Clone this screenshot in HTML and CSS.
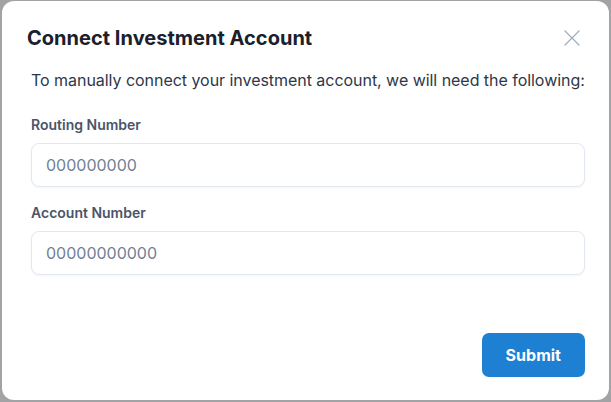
FILE: index.html
```html
<!DOCTYPE html>
<html lang="en">
<head>
<meta charset="utf-8">
<title>Connect Investment Account</title>
<link rel="stylesheet" href="styles.css">
</head>
<body>
<div class="backdrop">
  <section class="modal" role="dialog" aria-labelledby="modal-title">
    <header class="modal-header">
      <h2 id="modal-title" class="modal-title">Connect Investment Account</h2>
      <button class="close-btn" aria-label="Close">
        <svg width="16" height="16" viewBox="0 0 16 16" fill="none" stroke="currentColor" stroke-width="1.3" stroke-linecap="round">
          <path d="M1 1 L15 15 M15 1 L1 15"/>
        </svg>
      </button>
    </header>
    <div class="modal-body">
      <p class="intro">To manually connect your investment account, we will need the following:</p>
      <div class="field">
        <label class="field-label" for="routing">Routing Number</label>
        <input class="field-input" id="routing" type="text" placeholder="000000000">
      </div>
      <div class="field">
        <label class="field-label" for="account">Account Number</label>
        <input class="field-input" id="account" type="text" placeholder="00000000000">
      </div>
    </div>
    <footer class="modal-footer">
      <button class="submit-btn">Submit</button>
    </footer>
  </section>
</div>
</body>
</html>
```

FILE: styles.css
```css
* { box-sizing: border-box; }

html, body {
  margin: 0;
  padding: 0;
  height: 100%;
}

body {
  background: #a2a3a4;
  font-family: Inter, "Noto Sans", "Liberation Sans", sans-serif;
  overflow: hidden;
}

.backdrop {
  display: flex;
  padding: 1px 4px 2px 2px;
  height: 100%;
}

.modal {
  flex: 1;
  background: #ffffff;
  border-radius: 12px;
  display: flex;
  flex-direction: column;
  padding-bottom: 23px;
}

.modal-header {
  display: flex;
  align-items: center;
  justify-content: space-between;
  padding: 23px 24px 0 25px;
}

.modal-title {
  margin: 0;
  font-size: 20px;
  line-height: 28px;
  font-weight: 700;
  color: #1a202c;
  letter-spacing: 0.02px;
}

.close-btn {
  background: none;
  border: none;
  padding: 0;
  margin-right: 5px;
  color: #a0aec0;
  width: 16px;
  height: 16px;
  display: flex;
  cursor: pointer;
}

.modal-body {
  padding: 16px 24px 0 29px;
  display: flex;
  flex-direction: column;
}

.intro {
  margin: 0 0 23px;
  font-size: 16px;
  line-height: 24px;
  color: #2d3748;
  white-space: nowrap;
  letter-spacing: -0.04px;
}

.field {
  display: flex;
  flex-direction: column;
  margin-bottom: 16px;
}

.field-label {
  font-size: 14px;
  line-height: 20px;
  font-weight: 600;
  color: #4a5568;
  margin-bottom: 8px;
}

.field-input {
  height: 44px;
  width: 100%;
  border: 1px solid #e2e8f0;
  border-radius: 8px;
  padding: 0 14px;
  font-family: inherit;
  font-size: 16px;
  color: #1a202c;
  background: #fff;
  box-shadow: 0 1px 2px rgba(0,0,0,0.04);
  outline: none;
}

.field-input::placeholder {
  color: #718096;
}

.modal-footer {
  margin-top: auto;
  display: flex;
  justify-content: flex-end;
  padding-right: 24px;
}

.submit-btn {
  width: 103px;
  height: 44px;
  border: none;
  border-radius: 7px;
  background: #1d80d3;
  color: #ffffff;
  font-family: inherit;
  font-size: 16px;
  font-weight: 700;
  cursor: pointer;
}
```
